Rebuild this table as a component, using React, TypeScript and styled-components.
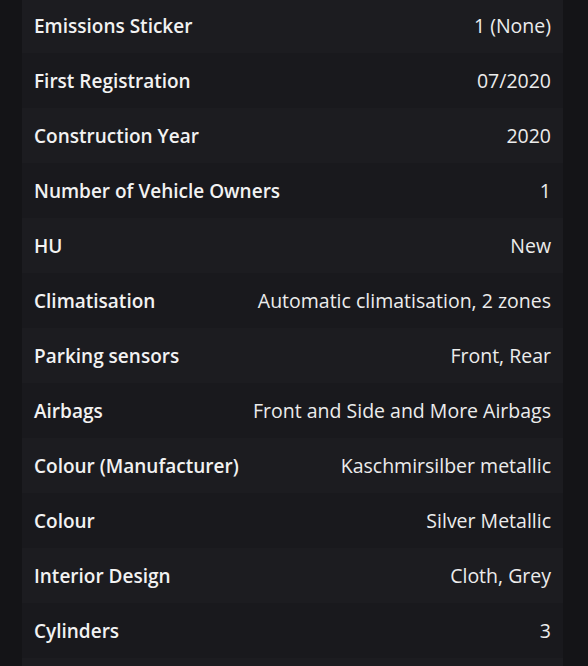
import React from 'react';
import styled, { createGlobalStyle } from 'styled-components';

const GlobalStyle = createGlobalStyle`
  html, body {
    margin: 0;
    padding: 0;
    background: #141417;
    font-family: "Open Sans", "Noto Sans", sans-serif;
  }
`;

const Page = styled.div`
  height: 666px;
  overflow: hidden;
  padding: 0 25px 0 22px;
`;

const SpecList = styled.div`
  margin-top: -2px;
  display: flex;
  flex-direction: column;
`;

const SpecRow = styled.div<{ $alt: boolean }>`
  height: 55px;
  display: flex;
  align-items: center;
  justify-content: space-between;
  padding: 0 12px;
  background: ${props => (props.$alt ? '#19191d' : '#1c1c20')};
`;

const Label = styled.span`
  color: #f2f2f2;
  font-size: 19px;
  font-weight: 600;
`;

const Value = styled.span`
  color: #ececec;
  font-size: 19.5px;
  font-weight: 400;
`;

const specs: [string, string][] = [
  ['Emissions Sticker', '1 (None)'],
  ['First Registration', '07/2020'],
  ['Construction Year', '2020'],
  ['Number of Vehicle Owners', '1'],
  ['HU', 'New'],
  ['Climatisation', 'Automatic climatisation, 2 zones'],
  ['Parking sensors', 'Front, Rear'],
  ['Airbags', 'Front and Side and More Airbags'],
  ['Colour (Manufacturer)', 'Kaschmirsilber metallic'],
  ['Colour', 'Silver Metallic'],
  ['Interior Design', 'Cloth, Grey'],
  ['Cylinders', '3'],
  ['', ''],
];

export default function App() {
  return (
    <>
      <GlobalStyle />
      <Page>
        <SpecList>
          {specs.map(([label, value], i) => (
            <SpecRow key={i} $alt={i % 2 === 1}>
              <Label>{label}</Label>
              <Value>{value}</Value>
            </SpecRow>
          ))}
        </SpecList>
      </Page>
    </>
  );
}
